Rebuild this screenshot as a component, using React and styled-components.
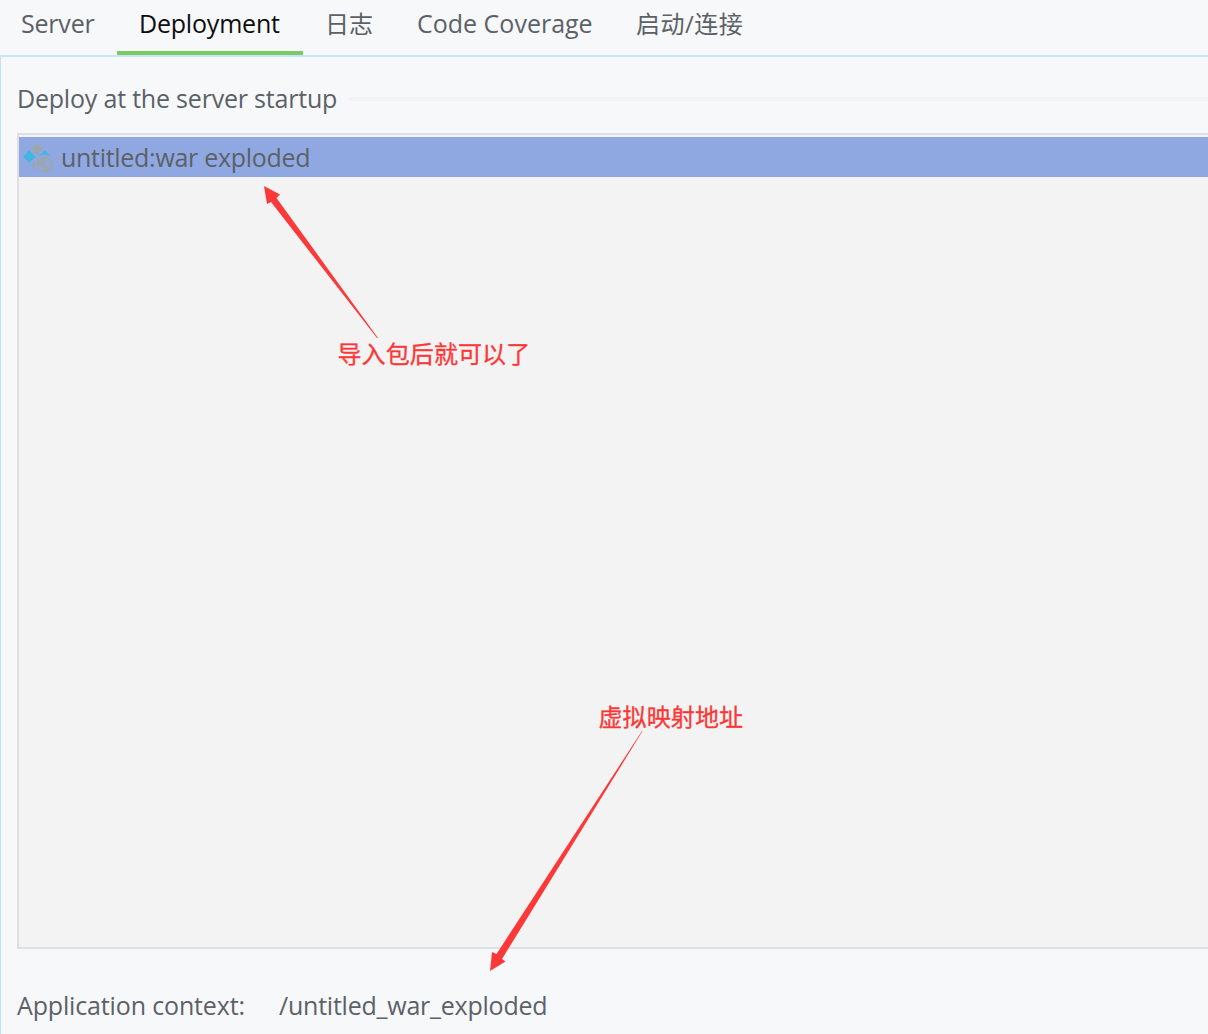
import React from 'react';
import styled, { createGlobalStyle } from 'styled-components';

const GlobalStyle = createGlobalStyle`
  * { box-sizing: border-box; }
  html, body { margin: 0; overflow: hidden; }
  body {
    background: #f7f8fa;
    color: #5c6168;
    font-family: "Open Sans", "Noto Sans CJK SC", sans-serif;
    font-size: 25px;
    line-height: 34px;
  }
`;

const Window = styled.div`
  position: relative;
  width: 1208px;
  height: 1034px;
  overflow: hidden;
  display: flex;
  flex-direction: column;
`;

const Tabs = styled.nav`
  display: flex;
  height: 55px;
  flex: none;
  margin-left: -1px;
`;

const Tab = styled.div`
  width: ${(p) => p.$width}px;
  height: 55px;
  padding: ${(p) => (p.$cjk ? 7 : 6)}px 0 0 22px;
  color: ${(p) => (p.$active ? '#0c0d0f' : 'inherit')};
  border-bottom: 4px solid ${(p) => (p.$active ? '#7bcb62' : 'transparent')};
`;

const Label = styled.span`
  display: block;
  white-space: pre;
  font-size: ${(p) => p.$size || 25}px;
  letter-spacing: ${(p) => p.$spacing || 0}px;
`;

const Panel = styled.main`
  flex: 1;
  display: flex;
  flex-direction: column;
  border-top: 2px solid #c9e3fc;
  border-left: 1px solid #c5e0fb;
  padding-left: 16px;
`;

const SectionTitle = styled.div`
  display: flex;
  align-items: center;
  height: 34px;
  margin-top: 25px;
`;

const TitleText = styled.div`
  width: 332px;
  flex: none;
  padding-bottom: 3px;
`;

const Rule = styled.div`
  flex: 1;
  height: 4px;
  background: #f2f3f4;
`;

const List = styled.div`
  height: 816px;
  margin-top: 17px;
  padding-top: 2px;
  border: 2px solid #dddfe2;
  border-right: 0;
  background: #f3f3f3;
`;

const Row = styled.div`
  display: flex;
  height: 40px;
  align-items: center;
  background: #90a8e1;
  padding-left: 4px;
`;

const RowIcon = styled.svg`
  width: 32px;
  height: 32px;
  margin-right: 6px;
  flex: none;
`;

const Context = styled.div`
  display: flex;
  margin-top: 39px;
`;

const ContextName = styled.div`
  width: 262px;
`;

const Arrows = styled.svg`
  position: absolute;
  left: 0;
  top: 0;
  pointer-events: none;
`;

const Note = styled.div`
  position: absolute;
  left: ${(p) => p.$x}px;
  top: ${(p) => p.$y}px;
  color: #fb3838;
  font-family: "Noto Sans CJK SC", sans-serif;
  font-size: 24px;
  letter-spacing: 0.1px;
  -webkit-text-stroke: 0.3px #fb3838;
  white-space: nowrap;
`;

function ArtifactIcon() {
  return (
    <RowIcon viewBox="0 0 32 32">
      <path d="M14 2 20.300 8.100 14 14.200 7.700 8.100z" fill="#9aa7b0" />
      <path d="m6.200 9.300 6.400 6.300-6.400 6.300L0 15.600z" fill="#40b6e0" />
      <path d="M21.700 9.300 28 15.300Q22 12.400 15.700 15.300z" fill="#40b6e0" />
      <path d="M12.300 18.800v9.800L8 23.700z" fill="#9aa7b0" />
      <circle cx="22" cy="23.700" r="7.300" fill="none" stroke="#9aa7b0" strokeWidth="1.900" />
      <path d="M15 23 16 19.500 19 17l5-.8 1.400 1.700-2.400 1.700-.2 2-3 .8 1 1.400 3.200.3 2 2.100-2.300 4.500-2.400-.4-.3-3-2.600-2.200z" fill="#9aa7b0" />
      <path d="m26 20.500 3.200 1v3.200l-2-.9z" fill="#9aa7b0" />
    </RowIcon>
  );
}

const tabs = [
  { name: 'Server', width: 118, spacing: -0.2 },
  { name: 'Deployment', width: 186, active: true, spacing: -0.2 },
  { name: '日志', width: 92, cjk: true, size: 24 },
  { name: 'Code Coverage', width: 219 },
  { name: '启动/连接', width: 150, cjk: true, size: 24, spacing: 0.5 },
];

export default function App() {
  return (
    <Window>
      <GlobalStyle />
      <Tabs>
        {tabs.map((t) => (
          <Tab key={t.name} $width={t.width} $active={t.active} $cjk={t.cjk}>
            <Label $size={t.size} $spacing={t.spacing}>{t.name}</Label>
          </Tab>
        ))}
      </Tabs>
      <Panel>
        <SectionTitle>
          <TitleText><Label $spacing={-0.2}>Deploy at the server startup</Label></TitleText>
          <Rule />
        </SectionTitle>
        <List>
          <Row>
            <ArtifactIcon />
            <Label $spacing={-0.29}>untitled:war exploded</Label>
          </Row>
        </List>
        <Context>
          <ContextName><Label $spacing={-0.15}>Application context:</Label></ContextName>
          <Label $spacing={-0.23}>/untitled_war_exploded</Label>
        </Context>
      </Panel>
      <Arrows width="1208" height="1034" fill="#fd3838">
        <path d="M264 186 280 194.500 276.500 198 378 338 377 338 271 202 267 204z" />
        <path d="M490 971 492 952 496.500 954 642 731 642.400 731.300 502 959 505.500 961.500z" />
      </Arrows>
      <Note $x={337.5} $y={336}>导入包后就可以了</Note>
      <Note $x={598.5} $y={699}>虚拟映射地址</Note>
    </Window>
  );
}
